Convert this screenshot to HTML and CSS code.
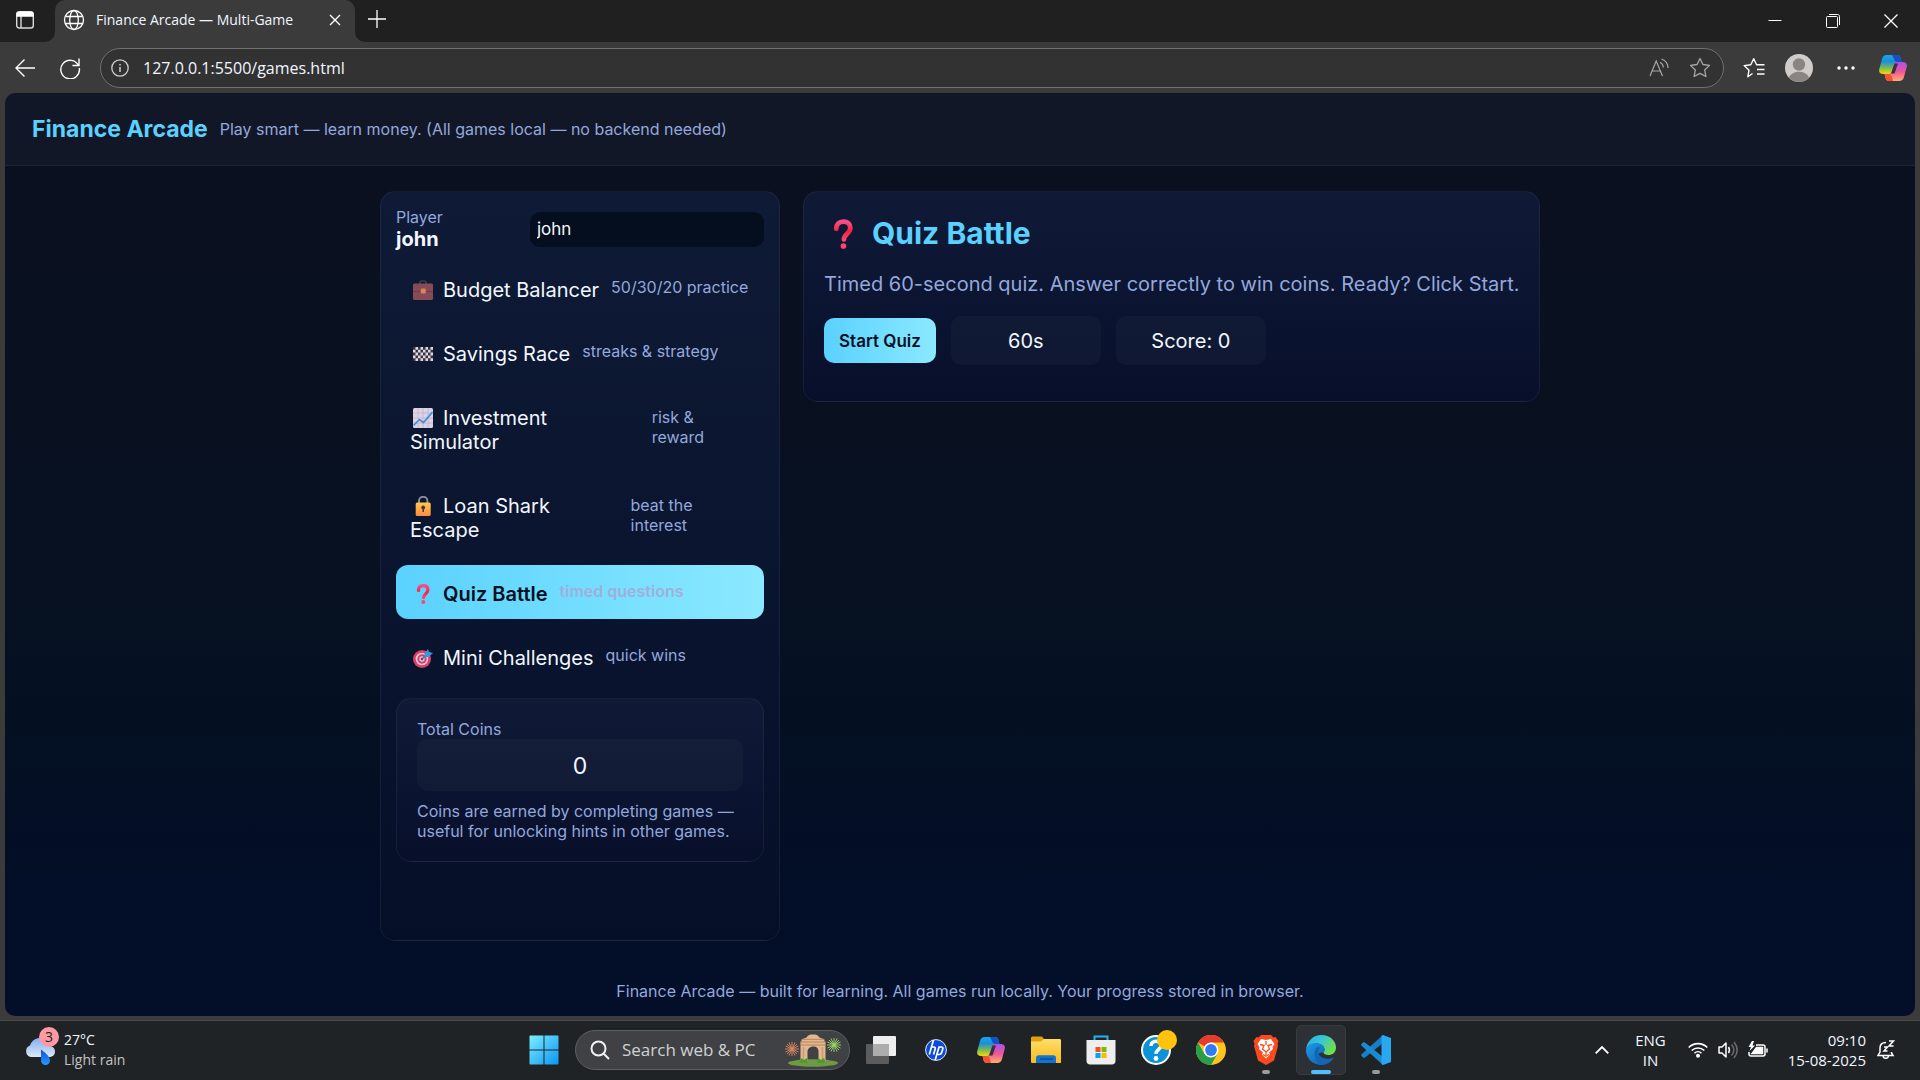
FILE: index.html
```html
<!DOCTYPE html>
<html lang="en">
<head>
<meta charset="utf-8">
<meta name="viewport" content="width=device-width, initial-scale=1">
<title>Finance Arcade — Multi-Game</title>
<link rel="stylesheet" href="styles.css">
</head>
<body>
<svg class="defs" width="0" height="0" aria-hidden="true">
  <defs>
    <linearGradient id="cpA" x1="0" y1="0" x2="0" y2="1"><stop offset="0" stop-color="#19a5ee"/><stop offset=".35" stop-color="#1b8fd8"/><stop offset=".65" stop-color="#6fb85a"/><stop offset="1" stop-color="#f5d90a"/></linearGradient>
    <linearGradient id="cpB" x1="0" y1="0" x2="0" y2="1"><stop offset="0" stop-color="#a455e8"/><stop offset=".5" stop-color="#f0549a"/><stop offset="1" stop-color="#ffb06a"/></linearGradient>
    <linearGradient id="question" x1="0" y1="0" x2="0" y2="1"><stop offset="0" stop-color="#fb4d85"/><stop offset=".55" stop-color="#f3243f"/><stop offset="1" stop-color="#fb4470"/></linearGradient>
    <linearGradient id="winG" gradientUnits="userSpaceOnUse" x1="0" y1="0" x2="30" y2="30"><stop offset="0" stop-color="#7cf0ff"/><stop offset="1" stop-color="#0a93f5"/></linearGradient>
    <linearGradient id="lockG" x1="0" y1="0" x2="0" y2="1"><stop offset="0" stop-color="#ffca45"/><stop offset="1" stop-color="#fb8a45"/></linearGradient>
    <linearGradient id="folderG" x1="0" y1="0" x2="0" y2="1"><stop offset="0" stop-color="#ffdd6b"/><stop offset="1" stop-color="#fbbb1b"/></linearGradient>
    <linearGradient id="edgeTop" x1="0" y1="0" x2="1" y2=".5"><stop offset="0" stop-color="#2aa9e8"/><stop offset=".5" stop-color="#38c5d8"/><stop offset="1" stop-color="#6be04d"/></linearGradient>
    <linearGradient id="edgeLow" x1="0" y1="0" x2="1" y2="1"><stop offset="0" stop-color="#1b9de0"/><stop offset="1" stop-color="#0b5fb8"/></linearGradient>
    <linearGradient id="dropG" x1="0" y1="0" x2="0" y2="1"><stop offset="0" stop-color="#0a50d8"/><stop offset="1" stop-color="#2a9bff"/></linearGradient>
    <linearGradient id="cloudG" x1="0" y1="0" x2="0" y2="1"><stop offset="0" stop-color="#7fb0f5"/><stop offset="1" stop-color="#dfe6f5"/></linearGradient>
    <symbol id="copilot" viewBox="0 0 28 26">
      <path d="M8 0h10c2.500 0 3 1.500 3.600 3.500L22.500 7H19c-3 0-3.500 1.500-4.200 4l-1.600 5.500C12.500 18.500 11.500 19 10 19H4c-3 0-4.500-2-3.700-5L3 4C3.800 1.500 5 0 8 0z" fill="url(#cpA)"/>
      <path d="M13 0h5c2.500 0 3 1.500 3.600 3.500L22.500 7h-4c-2 0-3-1-3.500-3z" fill="#1550c8"/>
      <path d="M20 26H10c-2.500 0-3-1.500-3.600-3.500L5.500 19H9c3 0 3.500-1.500 4.200-4l1.600-5.500C15.500 7.500 16.500 7 18 7h6c3 0 4.500 2 3.700 5L25 22c-.8 2.500-2 4-5 4z" fill="url(#cpB)"/>
      <path d="M14 26h-4c-2.500 0-3-1.500-3.600-3.500L5.500 19H9c2.500 0 3.500 1 4 3z" fill="#f2552c"/>
      <path d="M15.500 8.500h3.500l-3.500 10H12z" fill="#3b3040"/>
    </symbol>
    <symbol id="q-mark" viewBox="0 0 20 20">
      <path d="M5.500 6.500C5.500 3.400 7.500 1.700 10.300 1.700s4.600 1.700 4.600 4.300c0 3.600-4.300 4-4.300 7.600" fill="none" stroke="url(#question)" stroke-width="3.200" stroke-linecap="round"/>
      <circle cx="10.300" cy="18" r="1.900" fill="#fb4470"/>
    </symbol>
  </defs>
</svg>

<div class="window">
  <div class="titlebar">
    <div class="titlebar-start">
      <button class="icon-btn" aria-label="Tab actions"><svg width="20" height="20" viewBox="0 0 20 20" fill="none" stroke="#d8d8d8" stroke-width="1.400"><rect x="1.700" y="2" width="16.600" height="16" rx="2.500"/><path d="M6 6v12"/><path d="M2 6V4.500C2 3 3 2 4.500 2h11C17 2 18 3 18 4.500V6z" fill="#fff" stroke="#fff"/></svg></button>
    </div>
    <div class="tab-slot">
      <div class="tab">
        <svg width="22" height="22" viewBox="0 0 22 22" fill="none" stroke="#fff" stroke-width="1.300"><circle cx="11" cy="11" r="9.500"/><ellipse cx="11" cy="11" rx="4.300" ry="9.500"/><path d="M2.500 7.500h17M2.500 14.500h17"/></svg>
        <span class="tab-title">Finance Arcade — Multi-Game</span>
        <button class="icon-btn tab-close" aria-label="Close tab"><svg width="12" height="12" viewBox="0 0 12 12" stroke="#fff" stroke-width="1.400"><path d="M1 1l10 10M11 1L1 11"/></svg></button>
      </div>
    </div>
    <div class="titlebar-rest">
      <button class="icon-btn" aria-label="New tab"><svg width="18" height="18" viewBox="0 0 18 18" stroke="#fff" stroke-width="1.300"><path d="M9 0v18M0 9h18"/></svg></button>
      <div class="window-controls">
        <button class="icon-btn" aria-label="Minimize"><svg width="14" height="14" viewBox="0 0 14 14" stroke="#fff"><path d="M.5 6.500h13"/></svg></button>
        <button class="icon-btn" aria-label="Restore"><svg width="14" height="14" viewBox="0 0 14 14" fill="none" stroke="#fff"><rect x=".5" y="2.500" width="11" height="11" rx="1"/><path d="M3 .5h8.500c1.300 0 2 .7 2 2V11"/></svg></button>
        <button class="icon-btn" aria-label="Close"><svg width="14" height="14" viewBox="0 0 14 14" stroke="#fff" stroke-width="1.300"><path d="M.5.500l13 13M13.500.500l-13 13"/></svg></button>
      </div>
    </div>
  </div>

  <div class="toolbar">
    <button class="icon-btn" aria-label="Back"><svg width="20" height="20" viewBox="0 0 20 20" fill="none" stroke="#fff" stroke-width="1.400"><path d="M9.500 1.500L1 10l8.500 8.500M1 10h19"/></svg></button>
    <button class="icon-btn" aria-label="Refresh"><svg width="22" height="22" viewBox="0 0 22 22" fill="none" stroke="#fff" stroke-width="1.400"><path d="M19.500 8.500A9.300 9.300 0 1 0 20.300 11M20 1.500v7h-6.500"/></svg></button>
    <div class="address">
      <svg width="18" height="18" viewBox="0 0 18 18" fill="none" stroke="#d0d0d0" stroke-width="1.300"><circle cx="9" cy="9" r="8.200"/><path d="M9 8v5M9 5v1.500" stroke-width="1.500"/></svg>
      <input class="url" aria-label="Address" value="127.0.0.1:5500/games.html">
      <button class="icon-btn" aria-label="Read aloud"><svg width="20" height="20" viewBox="0 0 20 20" fill="none" stroke="#a8a8a8" stroke-width="1.200"><path d="M1 18L7.200 3l6.300 15M3 13h8.500M11 4.500c2 .8 3.200 2.500 3.300 5M12.500 1c3.800 1.200 6.300 4.500 6.500 9"/></svg></button>
      <button class="icon-btn" aria-label="Add to favorites"><svg width="22" height="22" viewBox="0 0 22 22" fill="none" stroke="#a8a8a8" stroke-width="1.300" stroke-linejoin="round"><path d="M11 1.500l2.900 6 6.600.9-4.800 4.600 1.200 6.500-5.900-3.100-5.900 3.100L6.300 13 1.500 8.400l6.600-.9z"/></svg></button>
    </div>
    <div class="toolbar-end">
      <button class="icon-btn" aria-label="Favorites"><svg width="22" height="22" viewBox="0 0 22 22" fill="none" stroke="#fff" stroke-width="1.400" stroke-linejoin="round"><path d="M9.500 16.500l-4.700 3.300L6 13.200 1.200 8.600l6.600-.9 2.900-6 2.900 6h7.900M14 12.500h7.500M14 17h7.500"/></svg></button>
      <button class="icon-btn" aria-label="Profile"><svg width="28" height="28" viewBox="0 0 28 28"><circle cx="14" cy="14" r="14" fill="#cfccca"/><circle cx="14" cy="10.500" r="6.200" fill="#8a8583"/><path d="M4 23.500c2-4 6-5.700 10-5.700s8 1.700 10 5.700A14 14 0 0 1 14 28 14 14 0 0 1 4 23.500z" fill="#8a8583"/></svg></button>
      <button class="icon-btn" aria-label="Settings and more"><svg width="18" height="4" viewBox="0 0 18 4" fill="#fff"><circle cx="2" cy="2" r="1.700"/><circle cx="9" cy="2" r="1.700"/><circle cx="16" cy="2" r="1.700"/></svg></button>
      <button class="icon-btn" aria-label="Copilot"><svg width="28" height="26"><use href="#copilot"/></svg></button>
    </div>
  </div>

  <div class="page">
    <header class="site-header">
      <h1>Finance Arcade</h1>
      <p class="muted">Play smart — learn money. (All games local — no backend needed)</p>
    </header>

    <div class="layout">
      <aside class="sidebar">
        <div class="player">
          <div>
            <label class="muted" for="player">Player</label>
            <strong>john</strong>
          </div>
          <input id="player" class="player-input" value="john">
        </div>

        <nav class="games">
          <button class="game"><span><svg class="emoji" viewBox="0 0 20 20"><path d="M7 4V2.500C7 1.500 7.500 1 8.500 1h3c1 0 1.500.5 1.500 1.500V4" fill="none" stroke="#5e4858" stroke-width="1.200"/><rect y="3.500" width="20" height="16.500" rx="1.500" fill="#854c57"/><path d="M0 11.500h20" stroke="#6d3f50"/><rect x="7.800" y="8.500" width="5" height="5" rx="1.200" fill="#de8256"/></svg>Budget Balancer</span><span class="muted">50/30/20 practice</span></button>
          <button class="game"><span><svg class="emoji" viewBox="0 0 20 20"><path d="M0 3h20v14H0z" fill="#ded9e2"/><path d="M0 4.400h20M2.500 7.200H20M0 10h20M2.500 12.800H20M0 15.600h20" stroke="#39333f" stroke-width="2.800" stroke-dasharray="2.500 2.500"/></svg>Savings Race</span><span class="muted">streaks &amp; strategy</span></button>
          <button class="game"><span><svg class="emoji" viewBox="0 0 20 20"><rect width="20" height="20" rx="1.500" fill="#dcd3e5"/><path d="M5 0v20M10 0v20M15 0v20M0 5h20M0 10h20M0 15h20" stroke="#bfb5cd" stroke-width=".8"/><path d="M.5 17.500l6-6 4 3L19.500 4" fill="none" stroke="#3f91d5" stroke-width="1.700"/></svg>Investment Simulator</span><span class="muted">risk &amp; reward</span></button>
          <button class="game"><span><svg class="emoji" viewBox="0 0 20 20"><path d="M6 8V5a4.200 4.200 0 0 1 8.400 0v3" fill="none" stroke="#8f8a9c" stroke-width="2"/><rect x="2.700" y="6.500" width="15" height="13.500" rx="1.500" fill="url(#lockG)"/><circle cx="10.200" cy="11.500" r="1.900" fill="#4a3048"/><path d="M9.500 12h1.500v4H9.500z" fill="#4a3048"/></svg>Loan Shark Escape</span><span class="muted">beat the interest</span></button>
          <button class="game active"><span><svg class="emoji"><use href="#q-mark"/></svg>Quiz Battle</span><span class="muted">timed questions</span></button>
          <button class="game"><span><svg class="emoji" viewBox="0 0 20 20"><circle cx="9" cy="11" r="9" fill="#d94068"/><circle cx="9" cy="11" r="6.300" fill="#e7c8dc"/><circle cx="9" cy="11" r="4.700" fill="#d33e68"/><circle cx="9" cy="11" r="2.700" fill="#e7c8dc"/><circle cx="9" cy="11" r="1.300" fill="#8c2850"/><path d="M9 11l6-6" stroke="#356fa8" stroke-width="1.300"/><path d="M11.500 5.500L15 1l1 3 4 1-4.500 4h-4z" fill="#3798df"/></svg>Mini Challenges</span><span class="muted">quick wins</span></button>
        </nav>

        <section class="card coins">
          <div class="muted">Total Coins</div>
          <div class="pill coin-total">0</div>
          <p class="muted">Coins are earned by completing games — useful for unlocking hints in other games.</p>
        </section>
      </aside>

      <main class="card game-panel">
        <h2><svg class="emoji emoji-lg"><use href="#q-mark"/></svg>Quiz Battle</h2>
        <p class="intro">Timed 60-second quiz. Answer correctly to win coins. Ready? Click Start.</p>
        <div class="controls">
          <button class="start">Start Quiz</button>
          <div class="pill">60s</div>
          <div class="pill">Score: 0</div>
        </div>
      </main>
    </div>

    <footer class="site-footer muted">Finance Arcade — built for learning. All games run locally. Your progress stored in browser.</footer>
  </div>

  <div class="taskbar">
    <button class="weather">
      <span class="weather-icon">
        <svg width="32" height="30" viewBox="0 0 32 30"><path d="M7 22a6 6 0 0 1-1-11.500C8 5 12 3 16 3c6 0 9 4 9 8 4 0 6 2.500 6 5.500S29 22 25 22z" fill="url(#cloudG)"/><path d="M17 14.500c5 4 9 7 9 11a4.300 4.300 0 0 1-9 0z" fill="url(#dropG)"/></svg>
        <span class="weather-badge">3</span>
      </span>
      <span class="two-line"><span>27°C</span><span class="dim">Light rain</span></span>
    </button>

    <div class="apps">
      <button class="app" aria-label="Start"><svg width="30" height="30" viewBox="0 0 30 30" fill="url(#winG)"><path d="M1.500.500H14.500v14H.5v-13c0-.6.400-1 1-1zM15.500 .500h13c.6 0 1 .4 1 1v13h-14zM.5 15.500h14v14h-13c-.6 0-1-.4-1-1zM15.500 15.500h14v13c0 .6-.4 1-1 1h-13z"/></svg></button>
      <div class="search">
        <svg width="20" height="20" viewBox="0 0 20 20" fill="none" stroke="#f2f2f2" stroke-width="2"><circle cx="8.500" cy="8.500" r="7"/><path d="M13.500 13.500l5.500 5.500"/></svg>
        <input class="search-input" aria-label="Search" placeholder="Search web &amp; PC">
        <svg width="56" height="34" viewBox="0 0 56 34"><ellipse cx="28" cy="30" rx="25" ry="3.700" fill="#6d9a42"/><path d="M15.500 30V9h1V6.500l5-2C23 2 25 1.500 28 1.500s5 .5 6.500 3l5 2V9h1v21h-7V19c0-4-2.200-5.500-5-5.500s-6 1.500-6 5.500v11z" fill="#e4b88e"/><path d="M15 9h26M17 6.300h22M16 12h24" stroke="#b4845f"/><path d="M18.500 14v13M37.500 14v13" stroke="#c89a74" stroke-width="1.500"/><path d="M14 30l2-5 3 2 3-2 1 5zM32 30l1-5 3 2 3-2 2 5z" fill="#4f9a2e"/><path d="M7 9v14M0 16h14M2 11l10 10M12 11L2 21M4 9.500l6 13M10 9.500l-6 13M.5 13l13 6M13.500 13l-13 6" stroke="#e08a60" stroke-width=".9"/><path d="M49 5v14M42 12h14M44 7l10 10M54 7L44 17M46 5.500l6 13M52 5.500l-6 13M42.500 9l13 6M55.500 9l-13 6" stroke="#9ad86a" stroke-width=".9"/></svg>
      </div>
      <button class="app" aria-label="Task view"><svg width="30" height="28" viewBox="0 0 30 28"><rect x="7" width="23" height="20" rx="1" fill="#eee"/><rect y="8" width="23" height="20" rx="1" fill="#5c5c5c"/><path d="M7 8h16v12H7z" fill="#adadad"/></svg></button>
      <button class="app" aria-label="HP"><svg width="22" height="22" viewBox="0 0 22 22"><circle cx="11" cy="11" r="10.400" fill="#0b4bd8" stroke="#e6ecfa"/><path d="M8.500 1L4.300 15.500M6.700 8h2c1.500 0 1.800.8 1.400 2.200L8.500 15.500M14.200 7.500L10.200 21M13.800 8h2.500c1.500 0 1.800.8 1.400 2.200l-1 3.300c-.4 1.300-1 2-2.500 2H12" fill="none" stroke="#fff" stroke-width="1.700"/></svg></button>
      <button class="app" aria-label="Copilot"><svg width="28" height="26"><use href="#copilot"/></svg></button>
      <button class="app" aria-label="File Explorer"><svg width="30" height="28" viewBox="0 0 30 28"><path d="M0 8V2C0 1 1 .5 2 .5h8c1 0 1.500.5 2.500 2L14 4v4z" fill="#e0a010"/><path d="M0 5.500h10l3-2.500h15.500c1 0 1.500.5 1.500 1.500V27H1.500C.5 27 0 26.500 0 25.500z" fill="url(#folderG)"/><path d="M5 27v-5c0-1.800 1-2.800 2.800-2.800h14.400c1.800 0 2.800 1 2.800 2.800v5z" fill="#1175cc"/><path d="M9 23h13" stroke="#0b4d94" stroke-width="1.500"/></svg></button>
      <button class="app" aria-label="Microsoft Store"><svg width="30" height="30" viewBox="0 0 30 30"><path d="M8.500 6V1.500h13V6" fill="none" stroke="#25b1ee" stroke-width="2"/><path d="M.5 5h29v21c0 2-1.500 3.500-3.500 3.500H4c-2 0-3.500-1.500-3.500-3.500z" fill="#eee"/><path d="M9.500 12h5v5h-5z" fill="#f25022"/><path d="M15.500 12h5v5h-5z" fill="#7fba00"/><path d="M9.500 18h5v5h-5z" fill="#00a4ef"/><path d="M15.500 18h5v5h-5z" fill="#ffb900"/></svg></button>
      <button class="app" aria-label="Get help"><svg width="30" height="30" viewBox="0 0 30 30"><circle cx="15" cy="15" r="14" fill="#0b93d8" stroke="#fff" stroke-width="2"/><path d="M10 11c0-3 2-4.700 5-4.700s5 1.700 5 4.400c0 3.700-5 3.700-5 8" fill="none" stroke="#fff" stroke-width="3.600"/><circle cx="15" cy="23.500" r="2.400" fill="#fff"/></svg><i class="app-badge"></i></button>
      <button class="app" aria-label="Chrome"><svg width="30" height="30" viewBox="0 0 30 30"><circle cx="15" cy="15" r="15" fill="#fdc41c"/><path d="M15 15L2 7.500A15 15 0 0 1 28 7.500H15z" fill="#e33b2e"/><path d="M2 7.500A15 15 0 0 0 15 30l6.500-11.200L15 22.500 8.500 18.800z" fill="#2a9d4a"/><circle cx="15" cy="15" r="7.500" fill="#fff"/><circle cx="15" cy="15" r="5.900" fill="#2f7cf0"/></svg></button>
      <button class="app open" aria-label="Brave"><svg width="26" height="30" viewBox="0 0 26 30"><path d="M8 0h10l2.500 2.500 2-.5L25.500 6l-1 3 .5 2-4 14.500L13 30l-8-4.500L1 11l.5-2-1-3 3-4 2 .5z" fill="#fb4a1e"/><path d="M13 5l5-1 3.500 5-2 3 .5 2-4 3.500 1 2-4 4-4-4 1-2L6 14l.5-2-2-3L8 4z" fill="#fff"/><path d="M7 9.500l4 1-1.500 3.500 3.500 3 3.500-3L15 10.500l4-1M13 6v4M13 17v3M10 19.500l3 1.700 3-1.700" fill="none" stroke="#fb4a1e" stroke-width="1.300"/></svg></button>
      <button class="app open current" aria-label="Microsoft Edge"><svg width="30" height="30" viewBox="0 0 30 30"><path d="M0 15C1 6 7 0 15.500 0 24 0 30 6 30 12.500c0 5-3.500 7.500-7.500 7.500-3 0-5-1-5-2.200 0-.8 1-1.300 1-3.300 0-3-3-5.500-7.500-5.500C6 9 2 11 0 15z" fill="url(#edgeTop)"/><path d="M0 16c0-5 4.500-8 10-8 4.500 0 8.500 2.500 8.500 6.500 0 2-1 2.500-1 3.300l-2.500-.3C10 18 12 30 19 29.500A15 15 0 0 1 0 16z" fill="url(#edgeLow)"/><path d="M11.500 12C7 15 7.500 24 13 28c2 1.500 5 2.200 7 1.300 3.500-1.200 6.500-3.800 8-7-6 3.200-15.500 1-15.500-5 0-2 .8-3.700 2-4.500-1-.8-2.200-1.100-3-.8z" fill="#1564b5"/></svg></button>
      <button class="app open" aria-label="Visual Studio Code"><svg width="30" height="30" viewBox="0 0 30 30"><path d="M22 0v8L4 22.500 2.500 23 .3 20.800V19.500z" fill="#1580c8"/><path d="M22 30v-8L4 7.500 2.500 7 .3 9.200v1.300z" fill="#1b8ad5"/><path d="M22 0l8 3v24l-8 3-1.500-1V1z" fill="#29a8f2"/></svg></button>
    </div>

    <div class="tray">
      <button class="icon-btn" aria-label="Show hidden icons"><svg width="14" height="8" viewBox="0 0 14 8" fill="none" stroke="#fff" stroke-width="1.800"><path d="M.7 7.300L7 1l6.300 6.300"/></svg></button>
      <button class="two-line language"><span>ENG</span><span>IN</span></button>
      <button class="status" aria-label="Network, volume and battery">
        <svg width="20" height="16" viewBox="0 0 20 16" fill="none" stroke="#fff" stroke-width="1.600"><path d="M.7 5.500a13.200 13.200 0 0 1 18.600 0M3.700 8.500a9 9 0 0 1 12.600 0M6.500 11.200a5 5 0 0 1 7 0"/><circle cx="10" cy="13.700" r="1.200" fill="#fff"/></svg>
        <svg width="20" height="18" viewBox="0 0 20 18" fill="none" stroke="#fff" stroke-width="1.500"><path d="M1 6h3l4-4v14l-4-4H1z" stroke-linejoin="round"/><path d="M10.500 6c1.300 2 1.300 4 0 6"/><path d="M13.500 3.500c3 3.500 3 7.500 0 11M16 1c4 5 4 11 0 16" stroke="#6c6c6c"/></svg>
        <svg width="20" height="18" viewBox="0 0 20 18" fill="none" stroke="#fff" stroke-width="1.500"><path d="M8 4h7c1.500 0 2 .7 2 2v7c0 1.500-.7 2-2 2H3c-1.300 0-2-.7-2-2v-2M19 7.500v4"/><path d="M8.500 6.500H14.500v6H4z" fill="#fff"/><path d="M4 0L.5 6H3L1.500 10 7 4.500H4.500L6 0z" fill="#fff" stroke="none"/></svg>
      </button>
      <button class="clock">
        <span class="two-line"><span>09:10</span><span>15-08-2025</span></span>
        <svg width="18" height="20" viewBox="0 0 18 20" fill="none" stroke="#fff" stroke-width="1.500"><path d="M9 2.500C5 2.500 3 5 3 8v4l-2 3.500h15L14.500 13v-1M6 16c.5 3 5 3 5.500 0M12 1h4.500L12 6h4.500M7 7h3.500L7 11h3.500"/></svg>
      </button>
    </div>
  </div>
</div>
</body>
</html>
```
FILE: styles.css
```css
:root {
  --chrome: #3b3b3b;
  --chrome-dark: #202020;
  --muted: #93a8dc;
  --text: #f2f7ff;
  --accent: #5ad1ff;
  --accent-gradient: linear-gradient(90deg, #5ad1ff, #8be9ff);
  --line: rgba(255, 255, 255, 0.06);
  --ui-font: "Open Sans", "Noto Sans", sans-serif;
}

* { box-sizing: border-box; }

body {
  margin: 0;
  background: var(--chrome);
  color: var(--text);
  font-family: Inter, "Liberation Sans", sans-serif;
  font-size: 20px;
  line-height: 24px;
}

h1, h2, p { margin: 0; }

button, input {
  font: inherit;
  color: inherit;
  border: 0;
  padding: 0;
  background: none;
}

input:focus { outline: none; }
svg { display: block; flex: none; }
.defs { position: absolute; }

.window {
  display: flex;
  flex-direction: column;
  min-height: 100vh;
}

.icon-btn {
  display: grid;
  place-items: center;
  flex: none;
}

/* Browser frame */
.titlebar {
  display: flex;
  height: 42px;
  background: var(--chrome);
  font-family: var(--ui-font);
}

.titlebar-start {
  display: flex;
  align-items: center;
  width: 55px;
  padding: 0 15px 2px;
  background: var(--chrome-dark);
  border-bottom-right-radius: 10px;
}

.tab-slot {
  width: 300px;
  background: linear-gradient(var(--chrome-dark) 50%, var(--chrome) 50%);
}

.tab {
  display: flex;
  align-items: center;
  gap: 11px;
  height: 42px;
  padding: 0 14px 2px 8px;
  background: var(--chrome);
  border-radius: 10px 10px 0 0;
  font-size: 14px;
}

.tab-title { flex: 1; white-space: nowrap; }

.titlebar-rest {
  display: flex;
  flex: 1;
  justify-content: space-between;
  padding: 0 22px 4px 13px;
  background: var(--chrome-dark);
  border-bottom-left-radius: 10px;
}

.window-controls { display: flex; gap: 44px; padding-top: 4px; }

.toolbar {
  display: flex;
  align-items: center;
  gap: 24px;
  padding: 6px 13px 5px 15px;
  font-family: var(--ui-font);
}

.address {
  display: flex;
  flex: 1;
  align-items: center;
  gap: 20px;
  height: 40px;
  margin-left: -5px;
  padding: 0 12px 0 10px;
  background: #323232;
  border: 1px solid #707070;
  border-radius: 20px;
  font-size: 16px;
}

.url { flex: 1; min-width: 0; margin-left: -6px; }

.toolbar-end {
  display: flex;
  align-items: center;
  gap: 20px;
  margin-left: -5px;
}

.toolbar-end .icon-btn:nth-child(3) { padding: 0 4px; }

/* Arcade page */
.page {
  display: flex;
  flex: 1;
  flex-direction: column;
  margin: 0 5px 4px;
  background: linear-gradient(#0b1020, #081121 45%, #041022 68%, #030e28 86%);
  border-radius: 10px;
  overflow: hidden;
}

.site-header {
  display: flex;
  align-items: center;
  gap: 12px;
  padding: 24px 27px;
  background: rgba(255, 255, 255, 0.03);
  border-bottom: 1px solid var(--line);
}

h1 { color: var(--accent); font-size: 23px; line-height: 24px; }

.muted {
  color: var(--muted);
  font-size: 16px;
  line-height: 20px;
}

.layout {
  display: grid;
  grid-template-columns: 400px 1fr;
  align-items: start;
  gap: 23px;
  width: 100%;
  max-width: 1160px;
  margin: 0 auto;
  padding: 25px 0;
}

.sidebar, .card {
  border: 1px solid var(--line);
  border-radius: 15px;
}

.sidebar {
  display: flex;
  flex-direction: column;
  gap: 15px;
  min-height: 750px;
  padding: 14px 15px;
  background: linear-gradient(#0f1a36, #050f28);
}

.card {
  padding: 20px;
  background: linear-gradient(#101a36, #070f2b);
}

.player {
  display: flex;
  align-items: center;
  justify-content: space-between;
  height: 46px;
}

.player label, .player strong { display: block; }

.player-input {
  width: 234px;
  height: 35px;
  padding: 0 7px 1px;
  background: #050e1e;
  border-radius: 10px;
  font-size: 17px;
}

.games { display: grid; gap: 10px; margin-top: -6px; }

.game {
  display: flex;
  align-items: center;
  gap: 12px;
  padding: 17px 14px 13px;
  border-radius: 12px;
  text-align: left;
}

.game .muted { margin: -2px 0 0; padding-bottom: 4px; }
.game.active { background: var(--accent-gradient); color: #03101f; font-weight: 600; }
.game.active .muted { color: #9fb0da; }

.emoji {
  display: inline-block;
  width: 20px;
  height: 20px;
  margin: 0 10px 0 3px;
  vertical-align: -3px;
}

.coins { padding: 20px; }

.pill {
  min-width: 150px;
  padding: 13px 12px 12px;
  background: rgba(255, 255, 255, 0.03);
  border-radius: 10px;
  text-align: center;
}

.coin-total { margin-bottom: 10px; padding: 15px 14px 13px; font-size: 23px; }

.game-panel { padding: 20px 16px 36px 20px; }

h2 {
  color: var(--accent);
  font-size: 30px;
  line-height: 42px;
}

.emoji-lg {
  width: 30px;
  height: 30px;
  margin: 0 14px 0 4px;
  vertical-align: -5px;
}

.intro { margin: 18px 0 20px; color: var(--muted); }

.controls { display: flex; align-items: center; gap: 15px; }

.start {
  padding: 11px 15px 10px;
  background: var(--accent-gradient);
  border-radius: 10px;
  color: #03101f;
  font-size: 17px;
  font-weight: 600;
}

.site-footer { padding: 15px; text-align: center; }

/* Taskbar */
.taskbar {
  display: grid;
  grid-template-columns: 1fr auto 1fr;
  align-items: center;
  height: 60px;
  padding: 0 18px 1px;
  background: #202326;
  border-top: 1px solid #484a4a;
  font-family: var(--ui-font);
  font-size: 14px;
  line-height: 20px;
}

.weather { display: flex; gap: 8px; justify-self: start; padding-left: 6px; text-align: left; }
.weather-icon { position: relative; padding-top: 5px; }

.weather-badge {
  position: absolute;
  top: -3px;
  left: 15px;
  width: 20px;
  height: 20px;
  background: #ff99a4;
  border-radius: 50%;
  color: #1c1c1c;
  text-align: center;
}

.two-line { display: grid; }
.dim { color: #c4c4c4; }

.apps { display: flex; align-items: center; gap: 5px; }

.app {
  position: relative;
  display: grid;
  place-items: center;
  width: 50px;
  height: 50px;
  border: 1px solid transparent;
  border-radius: 5px;
}

.app-badge {
  position: absolute;
  top: 4px;
  right: 3px;
  width: 20px;
  height: 20px;
  background: #ffc20e;
  border-radius: 50%;
}

.app.open::after {
  content: "";
  position: absolute;
  bottom: 0;
  left: calc(50% - 4px);
  width: 8px;
  height: 4px;
  background: #9a9a9a;
  border-radius: 2px;
}

.app.current { background: #2d3034; border-color: #383b3f; }
.app.current::after { left: calc(50% - 10px); width: 20px; background: #4cc2ff; }

.search {
  display: flex;
  align-items: center;
  gap: 12px;
  width: 275px;
  height: 40px;
  margin: 0 1px;
  padding: 0 8px 0 14px;
  background: #3f4145;
  border: 1px solid #5c5e61;
  border-radius: 20px;
  font-size: 17px;
}

.search-input { flex: 1; min-width: 0; }
.search-input::placeholder { color: #d2d2d2; opacity: 1; }

.tray { display: flex; align-items: center; justify-self: end; gap: 26px; font-size: 15px; }
.language { text-align: center; }
.status { display: flex; align-items: center; gap: 10px; margin-left: -4px; }
.clock { display: flex; align-items: center; gap: 11px; margin-left: -6px; padding-right: 7px; text-align: right; }
```
